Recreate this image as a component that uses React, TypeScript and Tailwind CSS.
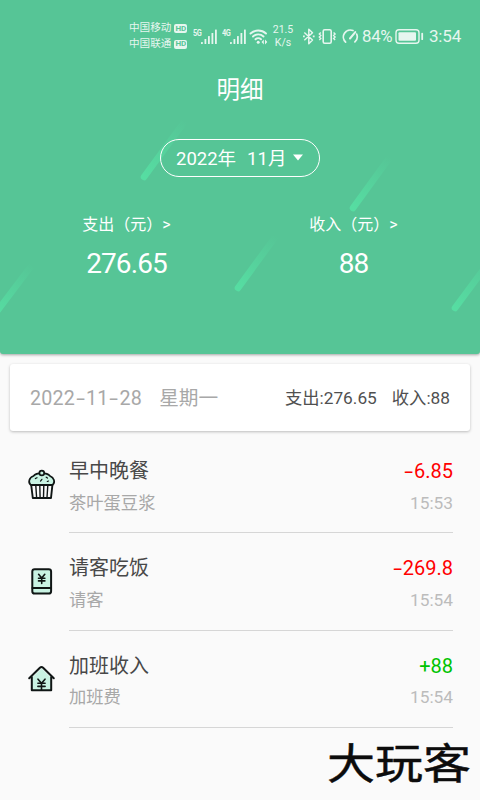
import React from 'react';

type Kind = 'cake' | 'book' | 'house';

const records: { kind: Kind; name: string; note: string; amount: string; time: string; income?: boolean }[] = [
  { kind: 'cake', name: '早中晚餐', note: '茶叶蛋豆浆', amount: '-6.85', time: '15:53' },
  { kind: 'book', name: '请客吃饭', note: '请客', amount: '-269.8', time: '15:54' },
  { kind: 'house', name: '加班收入', note: '加班费', amount: '+88', time: '15:54', income: true },
];

const streaks = [
  [144, 177, 185, 121],
  [353, 208, 390, 157],
  [238, 288, 276, 236],
  [-5, 314, 32, 265],
  [455, 308, 495, 254],
];

const Streaks: React.FC = () => (
  <svg className="absolute inset-0" width="480" height="354" fill="none">
    <defs>
      {streaks.map(([x1, y1, x2, y2], i) => (
        <linearGradient key={i} id={`streak${i}`} gradientUnits="userSpaceOnUse" x1={x1} y1={y1} x2={x2} y2={y2}>
          <stop offset="0" stopColor="#56dda2" />
          <stop offset="1" stopColor="#56dda2" stopOpacity="0" />
        </linearGradient>
      ))}
    </defs>
    {streaks.map(([x1, y1, x2, y2], i) => (
      <line key={i} x1={x1} y1={y1} x2={x2} y2={y2} stroke={`url(#streak${i})`} strokeWidth="6.5" strokeLinecap="round" />
    ))}
  </svg>
);

// Roboto's hyphen is too short next to its digits, so it gets stretched
const Dashed: React.FC<{ text: string }> = ({ text }) => (
  <span className="whitespace-nowrap">
    {text.split(/(-)/).map((part, i) =>
      part === '-' ? (
        <span key={i} className="inline-block w-[11px] text-center">
          <span className="inline-block origin-center scale-x-[1.6]">-</span>
        </span>
      ) : (
        part
      )
    )}
  </span>
);

const Carrier: React.FC<{ name: string }> = ({ name }) => (
  <div className="flex h-[15.5px] items-center gap-[3px]">
    <span className="text-[10.6px] leading-none">{name}</span>
    <span className="flex h-[9px] w-[13px] items-center justify-center rounded-[2px] bg-[#e6f6ef] text-[8px] leading-none font-bold text-[#56c596]">HD</span>
  </div>
);

const Signal: React.FC<{ label: string }> = ({ label }) => (
  <div className="flex h-4 w-[24px]">
    <span className="w-[8px] origin-top-left scale-x-[0.82] text-[9px] leading-[8px] font-bold tracking-[-0.5px]">{label}</span>
    <svg width="16" height="16" fill="currentColor">
      <rect x="0" y="13" width="1.8" height="2" rx=".5" />
      <rect x="3.5" y="10" width="1.8" height="5" rx=".5" />
      <rect x="7" y="7" width="1.8" height="8" rx=".5" />
      <rect x="10.5" y="4" width="1.8" height="11" rx=".5" />
      <rect x="14" y="0.5" width="1.8" height="14.5" rx=".5" />
    </svg>
  </div>
);

const StatusBar: React.FC = () => (
  <div className="flex h-[73px] items-center pl-[129px] text-[#e6f6ef]">
    <div className="w-[64px]">
      <Carrier name="中国移动" />
      <Carrier name="中国联通" />
    </div>
    <div className="flex gap-[5px]">
      <Signal label="5G" />
      <Signal label="4G" />
    </div>
    <svg className="ml-[3px]" width="20" height="18" viewBox="0 0 20 18" fill="none" stroke="currentColor" strokeWidth="1.9" strokeLinecap="round">
      <path d="M1.5 5.5a11.4 11.4 0 0 1 15.5 0M4 8.5a7.6 7.6 0 0 1 10.5 0M6.5 11.3a4 4 0 0 1 5.5 0" />
      <circle cx="9.2" cy="14.3" r="1.5" fill="currentColor" stroke="none" />
      <path d="M14.8 11.5v5l-2.3-2.5zM16 11.5v5l2.3-2.5z" fill="currentColor" stroke="none" />
    </svg>
    <div className="ml-[2px] w-[24px] text-center text-[10.5px] leading-[12.5px]">
      21.5
      <br />
      K/s
    </div>
    <svg className="ml-[7px]" width="14" height="18" viewBox="0 0 14 18" fill="none" stroke="currentColor" strokeWidth="1.5" strokeLinejoin="round">
      <path d="M2.3 4.5L10.5 12L6.8 15.7V1.2L10.5 4.8L2.3 12.3" />
      <path d="M1 8.4h1.8M10.8 8.4h1.8" strokeWidth="1.8" />
    </svg>
    <svg className="ml-[2px]" width="19" height="16" viewBox="0 0.5 19 16" fill="none" stroke="currentColor" strokeWidth="1.6">
      <rect x="5.2" y="1.3" width="8" height="13.5" rx="1.5" />
      <path d="M2.8 4L1.3 5.5L2.8 7L1.3 8.5L2.8 10L1.3 11.5M15.6 4L17.1 5.5L15.6 7L17.1 8.5L15.6 10L17.1 11.5" strokeWidth="1.4" />
    </svg>
    <svg className="ml-[5px]" width="17" height="16" viewBox="0 0.5 17 16" fill="none" stroke="currentColor" strokeWidth="1.7" strokeLinecap="round">
      <path d="M3.6 13.6A7 7 0 0 1 11 2M14.7 5.6A7 7 0 0 1 12.9 13.4" />
      <path d="M8 10L13.3 3.6" strokeWidth="2" />
    </svg>
    <span className="ml-[3px] w-[31px] text-[16.8px] leading-none tracking-[-0.3px]">84%</span>
    <svg className="ml-[2px]" width="29" height="16" viewBox="0 0.3 29 16" fill="none" stroke="currentColor">
      <rect x="1" y="1" width="23" height="13.5" rx="3" strokeWidth="1.4" />
      <rect x="3.5" y="3.5" width="17.5" height="8.5" rx="1" fill="currentColor" stroke="none" />
      <path d="M27.2 5v5.5" strokeWidth="1.8" strokeLinecap="round" />
    </svg>
    <span className="ml-[5px] text-[17px] leading-none tracking-[-0.2px]">3:54</span>
  </div>
);

const Total: React.FC<{ label: string; value: string }> = ({ label, value }) => (
  <div className="flex w-[227px] flex-col items-center">
    <span className="text-[16px] leading-6 whitespace-pre">{label}</span>
    <span className="mt-[9px] text-[28px] leading-9 tracking-[-0.9px]">{value}</span>
  </div>
);

const RecordIcon: React.FC<{ kind: Kind }> = ({ kind }) => (
  <svg width="29" height="31" viewBox="0 0 29 31" fill="none" stroke="#101615" strokeWidth="1.9" strokeLinejoin="round" strokeLinecap="round">
    {kind === 'cake' && (
      <>
        <path d="M3.6 15.8C.8 13.5 2.2 8.2 6.5 7C9.5 3.2 20 3.2 23 7C27 8.5 28.6 13.5 25.7 15.8Z" fill="#c9f3e3" strokeWidth="1.7" />
        <circle cx="14.8" cy="4" r="2.4" fill="#c9f3e3" strokeWidth="1.7" />
        <path d="M4.2 16h21.2L24 29H5.8z" fill="#fafafa" />
        <path d="M8.8 16.5l.8 12M12.8 16.5l.3 12M16.8 16.5l-.3 12M20.8 16.5l-.8 12" strokeWidth="1.4" />
        <path d="M8.4 9.6l1.6-.9M13.5 12.1l1.4-1.8M19.2 8.2l1.3.9M20.3 12.5l1.2-.5" strokeWidth="1.2" />
      </>
    )}
    {kind === 'book' && (
      <>
        <rect x="5.3" y="3.2" width="18.8" height="24.4" rx="2.4" fill="#c9f3e3" strokeWidth="2" />
        <path d="M5.5 22h18.5" strokeWidth="2" />
        <path d="M11.6 8.3l3.1 3.8L17.8 8.3M14.7 12.1v5.4M11.5 12.2h6.4M11.5 14.9h6.4" strokeWidth="1.6" />
      </>
    )}
    {kind === 'house' && (
      <>
        <path d="M4.7 14v12.8h19.6V14L14.5 4.3z" fill="#c9f3e3" stroke="none" />
        <path d="M2.2 14.3L12.9 3.8Q14.5 2.3 16.1 3.8L26.8 14.3M4.8 13v13.2h19.4V13" strokeWidth="2" />
        <path d="M11 15.2l3.5 4L18 15.2M14.5 19.2v6.6M10.9 19.2h7.2M10.9 22.4h7.2" strokeWidth="1.6" />
      </>
    )}
  </svg>
);

export default function App() {
  return (
    <div className="h-[800px] w-[480px] overflow-hidden bg-[#fafafa] font-['Roboto','Noto_Sans_CJK_SC',sans-serif]">
      <header className="relative h-[354px] rounded-b-[3px] bg-[#56c596] text-white shadow-[0_1px_3px_rgba(0,0,0,0.35)]">
        <Streaks />
        <div className="relative flex flex-col">
          <StatusBar />
          <h1 className="h-8 pt-px text-center text-[23.5px] leading-8">明细</h1>
          <button className="mt-[34px] flex h-[38px] w-[160px] items-center self-center rounded-full border-[1.4px] border-white pt-[2px] pl-[15px] text-[18.5px] leading-none">
            <span>2022年</span>
            <span className="ml-[11px]">11月</span>
            <svg className="mb-[3px] ml-[6px]" width="12" height="7" fill="currentColor">
              <path d="M1 .5h10L6 6.5z" />
            </svg>
          </button>
          <div className="mt-[36px] flex pl-[13px]">
            <Total label="支出（元）>" value="276.65" />
            <Total label="收入（元）>" value="88" />
          </div>
        </div>
      </header>

      <section className="mx-[10px] mt-[10px] flex h-[67px] items-center justify-between rounded-[3px] bg-white pt-[2px] pr-[20px] pl-[20px] shadow-[0_1px_3px_rgba(0,0,0,0.25)]">
        <div className="flex gap-[17px] text-[19.7px] text-[#a8a8a8]">
          <span className="tracking-[0.2px]">
            <Dashed text="2022-11-28" />
          </span>
          <span>星期一</span>
        </div>
        <div className="flex gap-[15px] text-[17.3px] text-[#505050]">
          <span>支出:276.65</span>
          <span>收入:88</span>
        </div>
      </section>

      <ul className="mt-[5px]">
        {records.map(r => (
          <li key={r.name} className="flex h-[97.3px] pr-[27px] pl-[27px]">
            <div className="w-[42px] pt-[33px]">
              <RecordIcon kind={r.kind} />
            </div>
            <div className="flex-1 border-b-[1.5px] border-[#d6d6d6] pt-[19px]">
              <div className="flex h-8 items-center justify-between text-[20px]">
                <span className="text-[#484848]">{r.name}</span>
                <span className={r.income ? 'text-[#00c400]' : 'text-[#ff0000]'}>
                  <Dashed text={r.amount} />
                </span>
              </div>
              <div className="flex h-[33px] items-center justify-between text-[17.3px]">
                <span className="text-[#a8a8a8]">{r.note}</span>
                <span className="text-[#bcbcbc]">{r.time}</span>
              </div>
            </div>
          </li>
        ))}
      </ul>

      <div className="mt-[9px] mr-[9px] flex h-[56px] items-center justify-end">
        <span className="origin-right scale-y-[0.88] text-[48px] leading-none text-[#0c0c0c] [-webkit-text-stroke:0.5px_#0c0c0c]">大玩客</span>
      </div>
    </div>
  );
}
